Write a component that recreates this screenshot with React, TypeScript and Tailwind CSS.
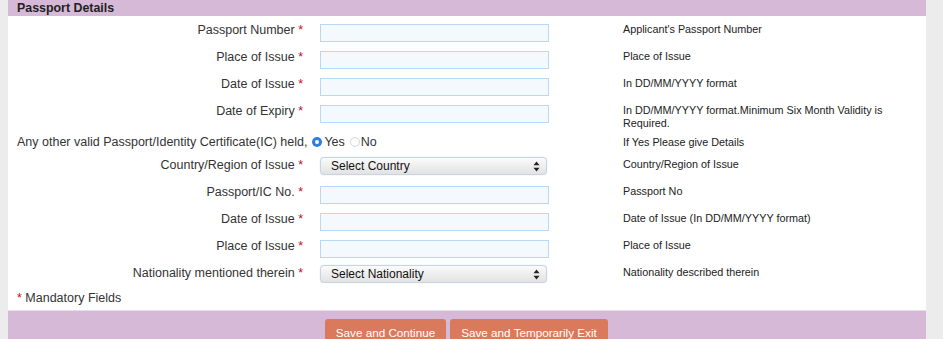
import React from "react";

const F = { fontFamily: '"Liberation Sans", Arial, Helvetica, sans-serif' };

function Star() {
  return <span className="text-[#d0021b]"> *</span>;
}

function Input() {
  return <div className="mt-[3px] h-[18px] w-[229px] border border-[#b9d7f7] bg-[#f4f9fe]" />;
}

function Select({ label }: { label: string }) {
  return (
    <div className="mt-[1px] flex h-[18px] w-[227px] items-center justify-between rounded-[4px] border border-[#c8d4e2] bg-gradient-to-b from-[#fbfbfb] to-[#e2e2e2] pl-[10px] pr-[6px] text-[12px] leading-none text-[#111] shadow-[0_0_1px_#9fbfe6]">
      <span>{label}</span>
      <svg width="7" height="11" viewBox="0 0 7 11">
        <path d="M3.5 0.5 L6.5 4.2 H0.5 Z" fill="#222" />
        <path d="M3.5 10.5 L6.5 6.8 H0.5 Z" fill="#222" />
      </svg>
    </div>
  );
}

function Row({
  h,
  label,
  field,
  help,
}: {
  h: string;
  label: string;
  field: React.ReactNode;
  help: React.ReactNode;
}) {
  return (
    <div className={`flex ${h}`}>
      <div className="w-[295px] text-right text-[12.5px] leading-[18px] text-[#333]">
        {label}
        <Star />
      </div>
      <div className="w-[320px] pl-[17px]">{field}</div>
      <div className="flex-1 pt-[1px] text-[10.8px] leading-[14px] text-[#222]">{help}</div>
    </div>
  );
}

export default function App() {
  return (
    <div className="flex h-[339px] w-[943px] overflow-hidden bg-[#eeeeee]" style={F}>
      <div className="w-[8px] bg-[#ececec]" />
      <div className="flex w-[918px] flex-col bg-white">
        <div className="h-[16px] bg-[#d5b9d6] pl-[9px] text-[12.4px] font-bold leading-[16px] text-[#222]">
          Passport Details
        </div>
        <div className="pt-[5px]">
          <Row h="h-[27px]" label="Passport Number" field={<Input />} help="Applicant's Passport Number" />
          <Row h="h-[27px]" label="Place of Issue" field={<Input />} help="Place of Issue" />
          <Row h="h-[27px]" label="Date of Issue" field={<Input />} help="In DD/MM/YYYY format" />
          <div className="flex h-[31px]">
            <div className="w-[295px] text-right text-[12.5px] leading-[18px] text-[#333]">
              Date of Expiry
              <Star />
            </div>
            <div className="w-[320px] pl-[17px]">
              <Input />
            </div>
            <div className="flex-1 pt-[2px] text-[10.8px] leading-[13px] text-[#222]">
              In DD/MM/YYYY format.Minimum Six Month Validity is
              <br />
              Required.
            </div>
          </div>
          <div className="flex h-[23px]">
            <div className="flex w-[615px] items-start pl-[9px] text-[12.5px] leading-[18px] text-[#333]">
              <span className="whitespace-nowrap">Any other valid Passport/Identity Certificate(IC) held,</span>
              <span className="ml-[5px] mt-[4px] flex h-[10px] w-[10px] items-center justify-center rounded-full bg-[#2f7de1]">
                <span className="h-[4px] w-[4px] rounded-full bg-white" />
              </span>
              <span className="ml-[2px]">Yes</span>
              <span className="ml-[5px] mt-[4px] h-[10px] w-[10px] rounded-full border border-[#d6d6d6] bg-white" />
              <span className="ml-[1px]">No</span>
            </div>
            <div className="flex-1 pt-[2px] text-[10.8px] leading-[14px] text-[#222]">If Yes Please give Details</div>
          </div>
          <Row h="h-[27px]" label="Country/Region of Issue" field={<Select label="Select Country" />} help="Country/Region of Issue" />
          <Row h="h-[27px]" label="Passport/IC No." field={<Input />} help="Passport No" />
          <Row h="h-[27px]" label="Date of Issue" field={<Input />} help="Date of Issue (In DD/MM/YYYY format)" />
          <Row h="h-[27px]" label="Place of Issue" field={<Input />} help="Place of Issue" />
          <Row h="h-[25px]" label="Nationality mentioned therein" field={<Select label="Select Nationality" />} help="Nationality described therein" />
          <div className="h-[18px] pl-[9px] text-[12.5px] leading-[18px] text-[#333]">
            <span className="text-[#d0021b]">*</span> Mandatory Fields
          </div>
        </div>
        <div className="mt-[3px] flex flex-1 gap-[4px] border-t border-[#e9dcea] bg-[#d5b9d6] pl-[317px] pt-[8px]">
          <div className="h-[24px] w-[121px] rounded-t-[3px] bg-[#da7a5c] pt-[6px] text-center text-[11.7px] leading-[15px] text-white">
            Save and Continue
          </div>
          <div className="h-[24px] w-[158px] rounded-t-[3px] bg-[#da7a5c] pt-[6px] text-center text-[11.7px] leading-[15px] text-white">
            Save and Temporarily Exit
          </div>
        </div>
      </div>
      <div className="flex-1 bg-[#ececec]" />
    </div>
  );
}
